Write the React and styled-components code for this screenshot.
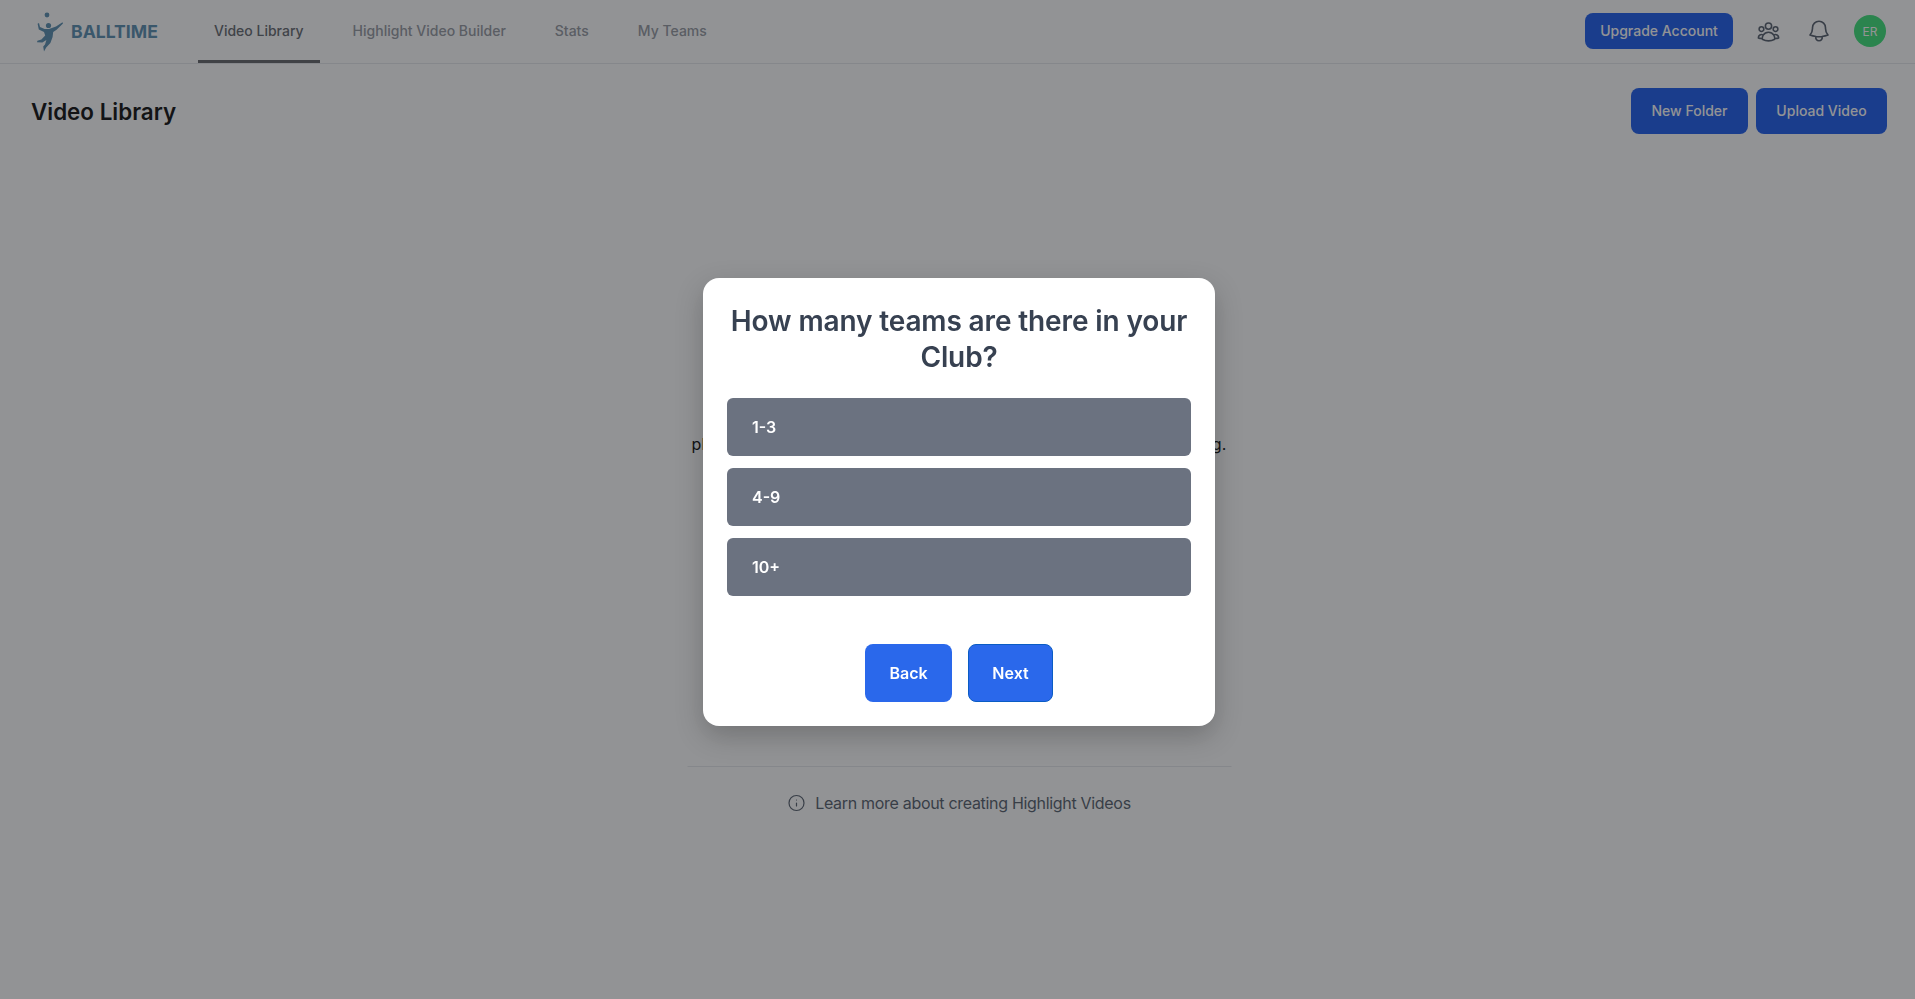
import React from "react";
import styled, { createGlobalStyle } from "styled-components";
import { HiOutlineUserGroup, HiOutlineBell } from "react-icons/hi2";
import { Info } from "lucide-react";

const Global = createGlobalStyle`
  html, body { margin: 0; padding: 0; background: #fff; }
  body { font-family: Inter, "Liberation Sans", sans-serif; color: #111827; }
  * { box-sizing: border-box; }
`;

const Page = styled.div`
  height: 999px;
  overflow: hidden;
  background: #fff;
`;
const Header = styled.header`
  height: 64px;
  display: flex;
  align-items: stretch;
  padding: 0 29px 0 36px;
  border-bottom: 1px solid #e5e7eb;
`;
const Brand = styled.div`
  display: flex;
  align-items: center;
  gap: 7px;
  width: 162px;
  color: #4f87ab;
`;
const BrandName = styled.span`
  font-size: 17.6px;
  font-weight: 700;
`;
const Tabs = styled.nav`
  display: flex;
  gap: 17px;
`;
const Tab = styled.a`
  display: flex;
  align-items: center;
  padding: 0 16px;
  height: 63px;
  font-size: 14px;
  font-weight: 500;
  color: ${(p) => (p.$active ? "#5a5e66" : "#8e929b")};
  border-bottom: 3px solid ${(p) => (p.$active ? "#5a5c60" : "transparent")};
`;
const HeaderActions = styled.div`
  margin-left: auto;
  padding-bottom: 1px;
  display: flex;
  align-items: center;
`;
const UpgradeButton = styled.button`
  width: 148px;
  height: 36px;
  margin-right: 23px;
  padding: 0 0 2px;
  border: 0;
  border-radius: 8px;
  background: #0e52ec;
  color: #fff;
  font: 500 14px Inter, sans-serif;
`;
const IconSlot = styled.span`
  display: flex;
  color: #4b5563;
  margin-right: ${(p) => p.$gap}px;
`;
const Avatar = styled.div`
  width: 32px;
  height: 32px;
  border-radius: 50%;
  background: #30e070;
  color: #fff;
  font-size: 12px;
  display: flex;
  align-items: center;
  justify-content: center;
`;
const TitleRow = styled.div`
  display: flex;
  align-items: center;
  justify-content: space-between;
  padding: 24px 28px 0 31px;
`;
const PageTitle = styled.h1`
  margin: 1px 0 0;
  font-size: 22.4px;
  font-weight: 600;
  color: #000;
`;
const TitleActions = styled.div`
  display: flex;
  gap: 8px;
`;
const ActionButton = styled.button`
  width: ${(p) => p.$w}px;
  height: 46px;
  padding: 0 0 1px;
  border: 0;
  border-radius: 8px;
  background: #0e52ec;
  color: #fff;
  font: 500 14px Inter, sans-serif;
`;
const EmptyState = styled.section`
  width: 544px;
  margin: 298px auto 0;
  transform: translateX(1.5px);
  display: flex;
  flex-direction: column;
  align-items: center;
`;
const EmptyText = styled.p`
  margin: 0;
  font-size: 16px;
  line-height: 24px;
  letter-spacing: 0.06px;
  white-space: nowrap;
  color: #000;
`;
const Divider = styled.hr`
  width: 100%;
  margin: 310px 0 0;
  border: 0;
  border-top: 1px solid #e5e7eb;
`;
const LearnMore = styled.div`
  margin-top: 24px;
  display: flex;
  align-items: center;
  gap: 10px;
  font-size: 16px;
  line-height: 24px;
  letter-spacing: -0.31px;
  color: #4b5563;
`;
const Overlay = styled.div`
  position: fixed;
  inset: 0;
  display: flex;
  align-items: center;
  justify-content: center;
  padding: 5px 0 0 3px;
  background: rgba(38, 40, 44, 0.5);
`;
const Modal = styled.div`
  width: 512px;
  padding: 24px;
  background: #fff;
  border-radius: 16px;
  box-shadow: 0 10px 28px rgba(0, 0, 0, 0.22);
`;
const ModalTitle = styled.h2`
  margin: 0 0 24px;
  padding-top: 1px;
  height: 72px;
  font-size: 28px;
  line-height: 36px;
  font-weight: 640;
  letter-spacing: -0.13px;
  color: #374151;
  text-align: center;
`;
const Options = styled.div`
  display: flex;
  flex-direction: column;
  gap: 12px;
`;
const Option = styled.button`
  height: 58px;
  padding: 0 25px;
  border: 0;
  border-radius: 6px;
  background: #6b7280;
  color: #fff;
  text-align: left;
  font: 600 16px Inter, sans-serif;
`;
const ModalActions = styled.div`
  margin-top: 48px;
  display: flex;
  justify-content: center;
  gap: 16px;
`;
const NavButton = styled.button`
  width: ${(p) => p.$w}px;
  height: 58px;
  border: ${(p) => (p.$focus ? "1.5px solid #0a5cc4" : "0")};
  border-radius: 8px;
  background: #2a68eb;
  color: #fff;
  font: 600 16px Inter, sans-serif;
`;

const PlayerLogo = () => (
  <svg width="28" height="40" viewBox="0 0 28 40" fill="currentColor" aria-hidden="true">
    <circle cx="11" cy="3" r="2.4" />
    <circle cx="12.5" cy="13.5" r="2.6" />
    <path d="M1.6 11.8 L3 11 L4 15 L8.6 17 L13 17 L20 14.5 L26.5 10.2 L27 11.4 L20.6 17.8 L17.2 20 L16.6 25 L14.4 31 L10.2 35.5 L8 39.5 L7.2 34.5 L9 32.6 L10.4 28 L6.4 30.6 L1 30.2 L1.4 28.8 L5.4 27.4 L9.2 23.6 L8 20 L2.8 17.4 Z" />
  </svg>
);

export default function App() {
  return (
    <Page>
      <Global />
      <Header>
        <Brand>
          <PlayerLogo />
          <BrandName>BALLTIME</BrandName>
        </Brand>
        <Tabs>
          <Tab $active>Video Library</Tab>
          <Tab>Highlight Video Builder</Tab>
          <Tab>Stats</Tab>
          <Tab>My Teams</Tab>
        </Tabs>
        <HeaderActions>
          <UpgradeButton>Upgrade Account</UpgradeButton>
          <IconSlot $gap={25}><HiOutlineUserGroup size={25} /></IconSlot>
          <IconSlot $gap={22}><HiOutlineBell size={26} /></IconSlot>
          <Avatar>ER</Avatar>
        </HeaderActions>
      </Header>
      <TitleRow>
        <PageTitle>Video Library</PageTitle>
        <TitleActions>
          <ActionButton $w={117}>New Folder</ActionButton>
          <ActionButton $w={131}>Upload Video</ActionButton>
        </TitleActions>
      </TitleRow>
      <EmptyState>
        <EmptyText>place your videos in a folder to begin creating highlights and scouting.</EmptyText>
        <Divider />
        <LearnMore>
          <Info size={18} strokeWidth={1.6} />
          Learn more about creating Highlight Videos
        </LearnMore>
      </EmptyState>
      <Overlay>
        <Modal>
          <ModalTitle>How many teams are there in your Club?</ModalTitle>
          <Options>
            <Option>1-3</Option>
            <Option>4-9</Option>
            <Option>10+</Option>
          </Options>
          <ModalActions>
            <NavButton $w={87}>Back</NavButton>
            <NavButton $w={85} $focus>Next</NavButton>
          </ModalActions>
        </Modal>
      </Overlay>
    </Page>
  );
}
